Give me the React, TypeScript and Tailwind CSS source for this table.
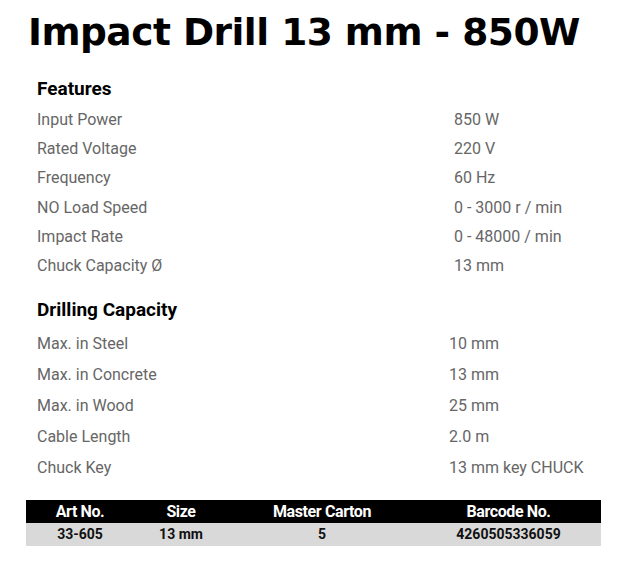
import React from "react";

const features: [string, string][] = [
  ["Input Power", "850 W"],
  ["Rated Voltage", "220 V"],
  ["Frequency", "60 Hz"],
  ["NO Load Speed", "0 - 3000 r / min"],
  ["Impact Rate", "0 - 48000 / min"],
  ["Chuck Capacity Ø", "13 mm"],
];

const drilling: [string, string][] = [
  ["Max. in Steel", "10 mm"],
  ["Max. in Concrete", "13 mm"],
  ["Max. in Wood", "25 mm"],
  ["Cable Length", "2.0 m"],
  ["Chuck Key", "13 mm key CHUCK"],
];

export default function App() {
  return (
    <div className="w-[630px] h-[570px] bg-white" style={{ fontFamily: "Roboto, sans-serif" }}>
      <h1
        className="pl-[28px] pt-[8px] text-[37.5px] leading-[48px] font-bold text-black tracking-[-0.5px]"
        style={{ fontFamily: "'DejaVu Sans', sans-serif" }}
      >
        Impact Drill 13 mm - 850W
      </h1>
      <div className="pl-[37px] pr-[29px] mt-[21px]">
        <h2 className="text-[19px] leading-[24px] font-bold text-black">Features</h2>
        <div className="mt-[4px]">
          {features.map(([k, v]) => (
            <div key={k} className="flex h-[29.3px] items-center text-[16px] text-[#666666]">
              <div className="w-[417px]">{k}</div>
              <div>{v}</div>
            </div>
          ))}
        </div>
        <h2 className="mt-[17px] text-[19px] leading-[24px] font-bold text-black">Drilling Capacity</h2>
        <div className="mt-[7px]">
          {drilling.map(([k, v]) => (
            <div key={k} className="flex h-[31px] items-center text-[16px] text-[#666666]">
              <div className="w-[412px]">{k}</div>
              <div>{v}</div>
            </div>
          ))}
        </div>
      </div>
      <div className="ml-[26px] mt-[16px] w-[575px] font-bold">
        <div className="grid grid-cols-[108px_94px_188px_185px] bg-black text-white h-[23px] items-center text-center text-[16px] tracking-[-0.4px]">
          <div>Art No.</div>
          <div>Size</div>
          <div>Master Carton</div>
          <div>Barcode No.</div>
        </div>
        <div className="grid grid-cols-[108px_94px_188px_185px] bg-[#d9d9d9] text-[#111] h-[23px] items-center text-center text-[14px]">
          <div>33-605</div>
          <div>13 mm</div>
          <div>5</div>
          <div>4260505336059</div>
        </div>
      </div>
    </div>
  );
}
